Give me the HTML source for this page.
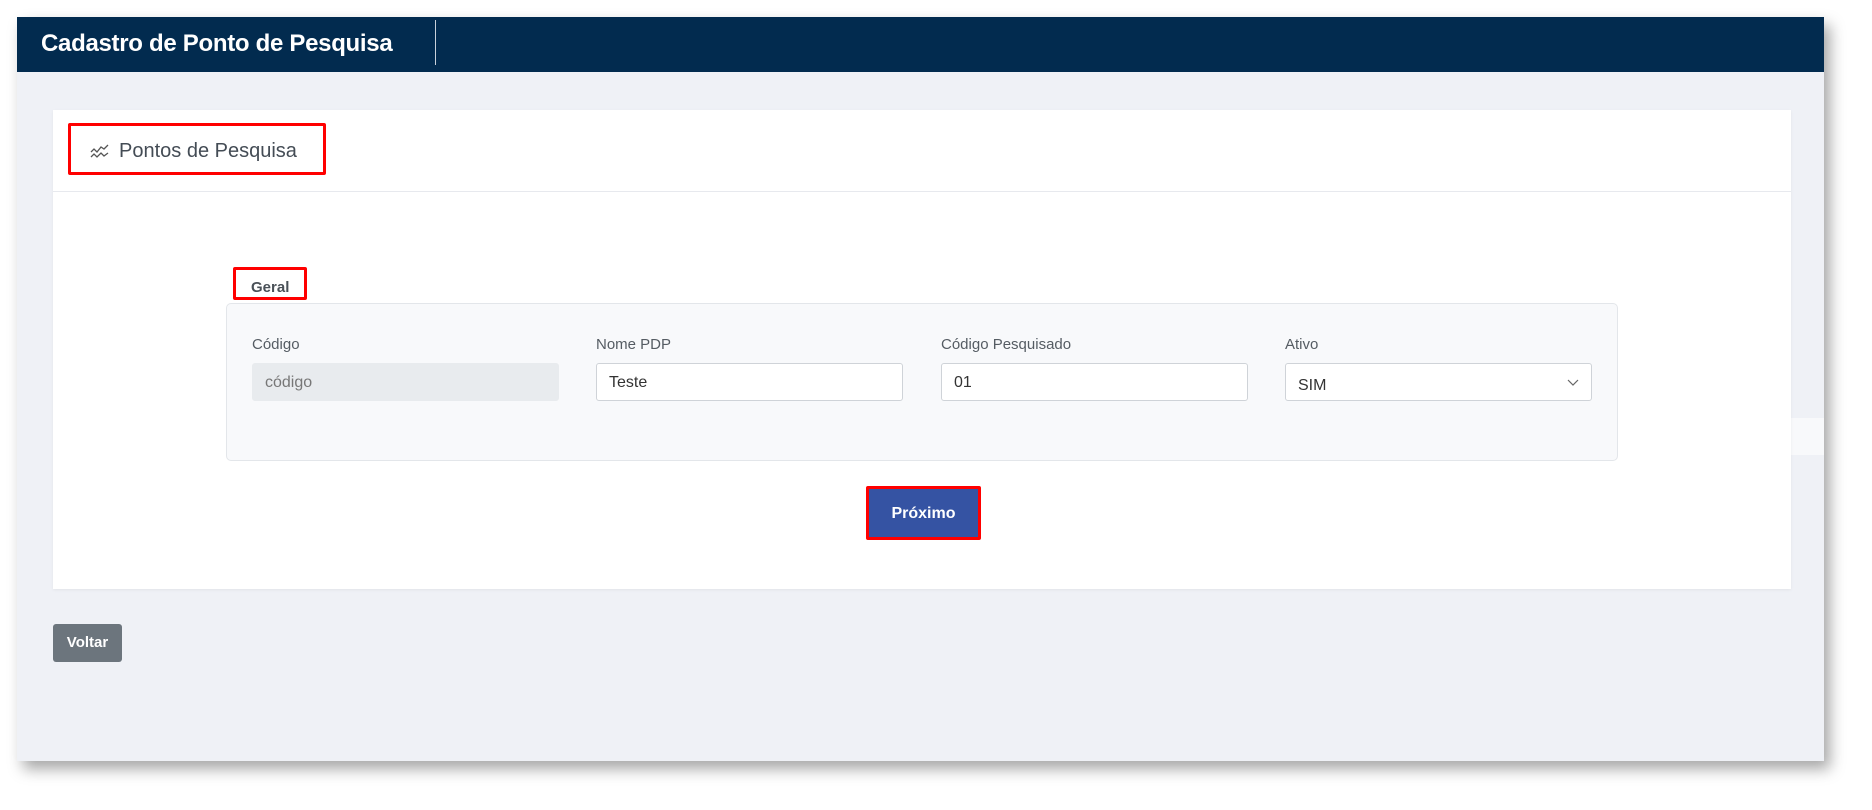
<!DOCTYPE html>
<html><head><meta charset="utf-8"><style>
*{box-sizing:border-box;margin:0;padding:0}
body{width:1872px;height:810px;background:#fff;font-family:"Liberation Sans",sans-serif;position:relative;overflow:hidden}
.frame{position:absolute;left:17px;top:17px;width:1807px;height:744px;background:#eff1f6;box-shadow:6px 8px 14px rgba(0,0,0,.35)}
.hdr{position:absolute;left:0;top:0;width:1807px;height:55px;background:#022b4f}
.hdr .t{position:absolute;left:24px;top:13px;color:#fff;font-size:24px;font-weight:bold;letter-spacing:-.3px}
.hdr .d{position:absolute;left:418px;top:3px;width:1px;height:45px;background:#c8d0da}
.card{position:absolute;left:36px;top:93px;width:1738px;height:479px;background:#fff;box-shadow:0 1px 3px rgba(0,0,0,.06)}
.ch{height:82px;border-bottom:1px solid #e7e9ee}
.red{position:absolute;border:3px solid #f00;border-radius:2px}
.title{position:absolute;left:66px;top:30px;font-size:20px;color:#444c55}
.strip{position:absolute;left:1774px;top:401px;width:33px;height:37px;background:#f8f9fb}
.fs{position:absolute;left:173px;top:193px;width:1392px;height:158px;background:#f8f9fb;border:1px solid #e3e6ea;border-radius:5px}
.lbl{position:absolute;top:226px;font-size:15px;color:#555c63}
.inp{position:absolute;top:253px;width:307px;height:38px;border:1px solid #cfd3d8;border-radius:3px;background:#fff;font-size:16px;color:#333;padding:10px 12px}
.btn{position:absolute;left:813px;top:376px;width:115px;height:54px;background:#3553a3;color:#fff;font-weight:bold;font-size:16px;text-align:center;line-height:49px;border:3px solid #f00;border-radius:2px}
.voltar{position:absolute;left:36px;top:607px;width:69px;height:38px;background:#6c757d;color:#fff;font-size:15px;font-weight:bold;text-align:center;line-height:38px;border-radius:3px}
</style></head><body>
<div class="frame">
 <div class="hdr"><div class="t">Cadastro de Ponto de Pesquisa</div><div class="d"></div></div>
 <div class="strip"></div>
 <div class="card">
  <div class="ch"></div>
  <div class="red" style="left:15px;top:13px;width:258px;height:52px"></div>
  <svg style="position:absolute;left:37px;top:33px" width="20" height="16" viewBox="0 0 20 16" fill="none" stroke="#555" stroke-width="1.3"><path d="M1 9l3-3 3 3 4-5 3 2 4-4"/><path d="M1 14l3-3 3 3 4-4 3 3 4-3"/></svg>
  <div class="title">Pontos de Pesquisa</div>
  <div class="red" style="left:180px;top:157px;width:74px;height:33px"></div>
  <div style="position:absolute;left:198px;top:169px;font-size:15px;font-weight:bold;color:#4a5158">Geral</div>
  <div class="fs"></div>
  <div class="lbl" style="left:199px">Código</div>
  <div class="lbl" style="left:543px">Nome PDP</div>
  <div class="lbl" style="left:888px">Código Pesquisado</div>
  <div class="lbl" style="left:1232px">Ativo</div>
  <div class="inp" style="left:199px;background:#e8ebee;border-color:#e8ebee;color:#777">código</div>
  <div class="inp" style="left:543px">Teste</div>
  <div class="inp" style="left:888px">01</div>
  <div class="inp" style="left:1232px;padding-top:13px">SIM<svg style="position:absolute;right:12px;top:15px" width="12" height="8" viewBox="0 0 12 8" fill="none" stroke="#666" stroke-width="1.2"><path d="M1 1l5 5 5-5"/></svg></div>
  <div class="btn">Próximo</div>
 </div>
 <div class="voltar">Voltar</div>
</div>
</body></html>
